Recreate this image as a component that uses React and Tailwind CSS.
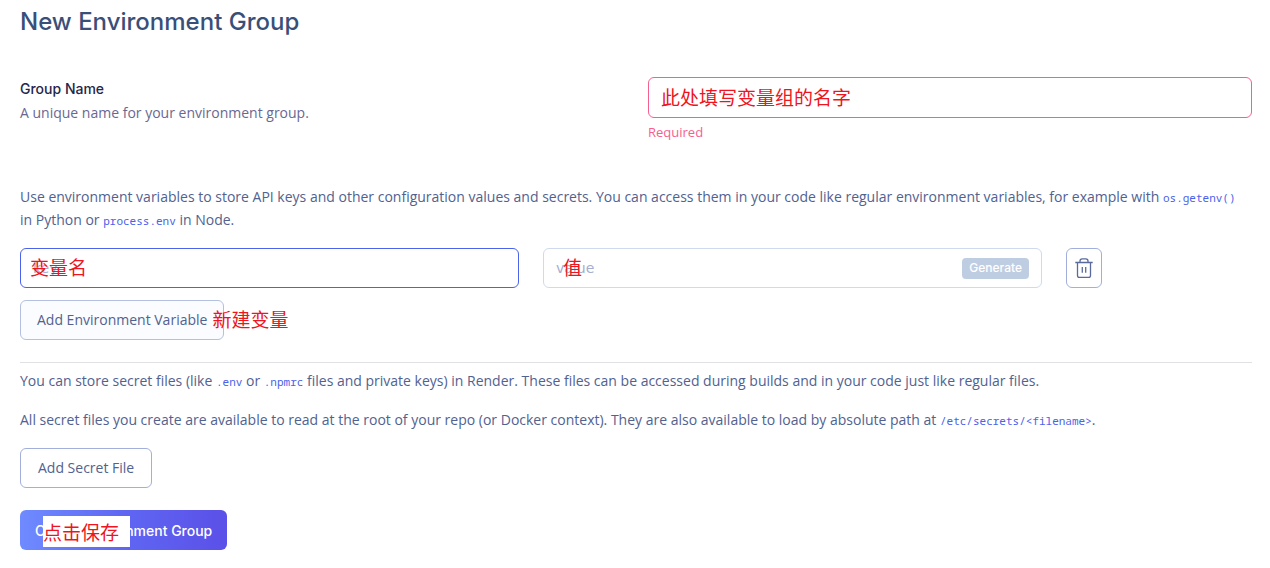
function Code({ children }) {
  return (
    <code className="font-['Noto_Sans_Mono','DejaVu_Sans_Mono',monospace] text-[11px] leading-none text-[#4b62ea]">
      {children}
    </code>
  );
}

function Note({ className, children }) {
  return (
    <span
      className={`pointer-events-none absolute font-['Noto_Sans_CJK_SC',sans-serif] text-[19px] leading-6 whitespace-nowrap text-[#ee1420] ${className}`}
    >
      {children}
    </span>
  );
}

function TrashIcon() {
  return (
    <svg width="20" height="22" viewBox="0 0 20 22" fill="none" stroke="#5a6a9e" strokeWidth="1.3" aria-hidden="true">
      <path d="M1.300 5.500h17.400M6 5.200V4c0-1.400.8-2.200 2.200-2.200h3.600c1.400 0 2.200.8 2.200 2.200v1.200M3.500 5.500v12.900c0 1.200.7 1.900 1.900 1.900h9.200c1.200 0 1.900-.7 1.900-1.900V5.500" />
      <path d="M8.300 10v5.800M11.700 10v5.800" />
    </svg>
  );
}

export default function App() {
  return (
    <main className="bg-white pt-2 pr-[18px] pb-4 pl-5 font-['Open_Sans',sans-serif] text-sm leading-[23px] text-[#51628f]">
      <h1 className="font-['Inter',sans-serif] text-2xl leading-7 font-medium text-[#3a4f78]">New Environment Group</h1>

      <section className="mt-[41px] grid grid-cols-2 gap-6">
        <div className="leading-6">
          <label htmlFor="group-name" className="block font-['Inter',sans-serif] font-medium text-[#26264a]">
            Group Name
          </label>
          <p className="text-[#6b6790]">A unique name for your environment group.</p>
        </div>
        <div>
          <input
            id="group-name"
            type="text"
            defaultValue="此处填写变量组的名字"
            className="block h-[41px] w-full rounded-md border border-[#f5608e] px-3 pb-0.5 font-['Noto_Sans_CJK_SC',sans-serif] text-[19px] text-[#ee1420] outline-none"
          />
          <p className="mt-1 text-[13px] leading-5 text-[#f5608e]">Required</p>
        </div>
      </section>

      <p className="mt-[43px] pr-2">
        Use environment variables to store API keys and other configuration values and secrets. You can access them in
        your code like regular environment variables, for example with <Code>os.getenv()</Code> in Python or{" "}
        <Code>process.env</Code> in Node.
      </p>

      <div className="mt-[17px] grid grid-cols-[1fr_1fr_186px] gap-6">
        <div className="relative">
          <input
            type="text"
            aria-label="Key"
            placeholder="key"
            className="block h-10 w-full rounded-md border border-[#4b62ea] px-3 font-['DejaVu_Sans',sans-serif] outline-none placeholder:text-[#a5aed0]"
          />
          <Note className="top-[7px] left-[10px]">变量名</Note>
        </div>
        <div className="relative">
          <div className="flex h-10 items-center rounded-md border border-[#cfdaee] px-3">
            <input
              type="text"
              aria-label="Value"
              placeholder="value"
              className="min-w-0 flex-1 font-['DejaVu_Sans',sans-serif] outline-none placeholder:text-[#a5aed0]"
            />
            <button
              type="button"
              className="h-[21px] rounded bg-[#bfcde3] px-[7px] font-['Inter',sans-serif] text-xs leading-5 font-medium text-white"
            >
              Generate
            </button>
          </div>
          <Note className="top-[7px] left-5">值</Note>
        </div>
        <button
          type="button"
          aria-label="Delete variable"
          className="flex h-10 w-9 items-center justify-center rounded-md border border-[#a3afdb]"
        >
          <TrashIcon />
        </button>
      </div>

      <div className="relative mt-3 w-fit">
        <button type="button" className="h-10 rounded-md border border-[#b3c0e0] bg-[#fafcff] px-4 pb-0.5">
          Add Environment Variable
        </button>
        <Note className="top-[7px] -right-16">新建变量</Note>
      </div>

      <hr className="mt-[22px] border-[#dfe1e5]" />

      <p className="mt-[6px]">
        You can store secret files (like <Code>.env</Code> or <Code>.npmrc</Code> files and private keys) in Render.
        These files can be accessed during builds and in your code just like regular files.
      </p>
      <p className="mt-4">
        All secret files you create are available to read at the root of your repo (or Docker context). They are also
        available to load by absolute path at <Code>/etc/secrets/&lt;filename&gt;</Code>.
      </p>

      <button type="button" className="mt-[17px] block h-10 rounded-md border border-[#a3afdb] px-[17px] pb-0.5">
        Add Secret File
      </button>

      <div className="relative mt-[22px] w-fit">
        <button
          type="button"
          className="h-10 rounded-md bg-linear-to-r from-[#6f8bff] via-[#5f66f2] to-[#5b50e8] px-[15px] font-['Inter',sans-serif] font-medium text-white"
        >
          Create Environment Group
        </button>
        <Note className="top-[6px] left-[23px] h-[31px] w-[87px] bg-white pt-1">点击保存</Note>
      </div>
    </main>
  );
}
